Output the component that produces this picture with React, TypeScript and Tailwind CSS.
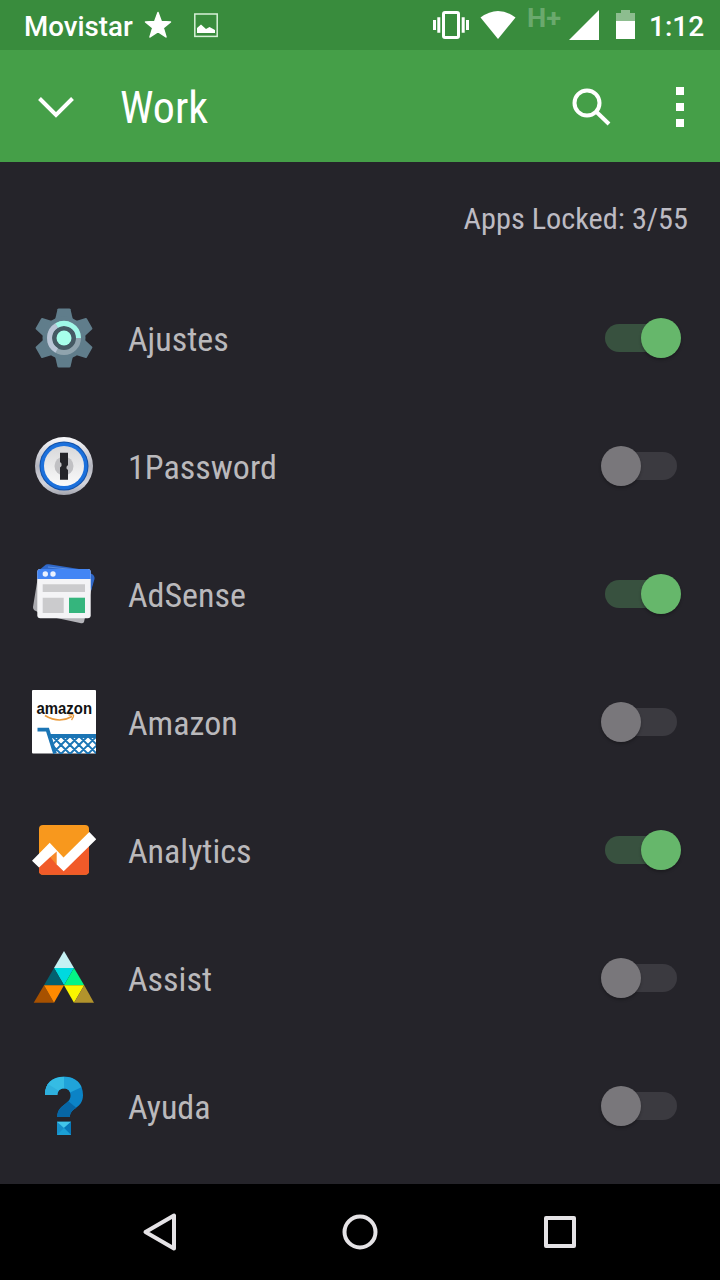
import React from 'react';

interface AppItem {
  name: string;
  locked: boolean;
  icon: React.ReactNode;
}

const SettingsIcon = () => (
  <svg className="size-16" viewBox="0 0 64 64">
    <g fill="#607d8b">
      {[0, 60, 120, 180, 240, 300].map((angle) => (
        <path key={angle} d="M23 14 25.500 3.200Q25.800 2.500 26.600 2.500H37.400Q38.200 2.500 38.500 3.200L41 14Z" transform={`rotate(${angle} 32 32)`} />
      ))}
      <circle cx="32" cy="32" r="21.500" />
    </g>
    <circle cx="32" cy="32" r="12.500" fill="#455a64" />
    <g fill="none" strokeWidth="5">
      <circle cx="32" cy="32" r="14.500" stroke="#90a4ae" />
      <path d="M24.700 44.500A14.500 14.500 0 0 1 24.700 19.500" stroke="#b9c5d6" />
      <path d="M24.700 19.500A14.500 14.500 0 0 1 46.500 32" stroke="#a0f8e8" />
    </g>
    <circle cx="32" cy="32" r="7.500" fill="#a7ffeb" />
  </svg>
);

const PasswordIcon = () => (
  <svg className="size-16" viewBox="0 0 64 64">
    <defs>
      <linearGradient id="rim" x1="0" y1="0" x2="0" y2="1">
        <stop offset="0" stopColor="#fafafd" />
        <stop offset="0.5" stopColor="#b4b5be" />
        <stop offset="0.8" stopColor="#d4d5dd" />
        <stop offset="1" stopColor="#a3a4ad" />
      </linearGradient>
      <linearGradient id="face" x1="0" y1="0" x2="0" y2="1">
        <stop offset="0" stopColor="#d8d8da" />
        <stop offset="1" stopColor="#fafafa" />
      </linearGradient>
    </defs>
    <circle cx="32" cy="32" r="29" fill="url(#rim)" />
    <circle cx="32" cy="32" r="24.500" fill="#1452a8" />
    <circle cx="32" cy="32" r="23.500" fill="#1b70dc" />
    <circle cx="32" cy="32" r="20" fill="url(#face)" />
    <circle cx="32" cy="32" r="9.500" fill="#c0c0c3" />
    <path d="M28 18.700H36V31Q33.800 32.500 34.500 34.500L36 36V45.700H28V33.500Q30.300 31.500 29.500 29.500L28 28Z" fill="#252529" />
  </svg>
);

const AdSenseIcon = () => (
  <svg className="size-16" viewBox="0 0 64 64">
    <path d="M7 8 1 45Q1 48 4 49L10 53Z" fill="#aaaaaf" />
    <path d="M55 12 62 15 52 60Q51 62 48 61L20 55Z" fill="#b4b4b9" />
    <path d="M6 9 14 2.500Q15 2 17 2.300L47 7 60 12Q63 14 62.500 17L59 29 54 12Z" fill="#2f68ca" />
    <path d="M16 5 45 8" stroke="#5b8fe2" strokeWidth="1" />
    <rect x="5.300" y="7" width="53.400" height="49.300" rx="3" fill="#f4f4f6" />
    <path d="M5.300 17V10Q5.300 7 8.300 7H55.700Q58.700 7 58.700 10V17Z" fill="#4285f4" />
    <circle cx="13.300" cy="12" r="2.700" fill="#e9f1ff" />
    <circle cx="21" cy="12" r="2.700" fill="#e9f1ff" />
    <path d="M10.700 22.300H53V30H10.700ZM10.700 35.700H31.700V51H10.700Z" fill="#cbcbcd" />
    <path d="M37 35.700H53V51H37Z" fill="#35b57d" />
  </svg>
);

const AmazonIcon = () => (
  <svg className="size-16" viewBox="0 0 64 64">
    <defs>
      <clipPath id="basket">
        <path d="M19 45H64V64H24Z" />
      </clipPath>
    </defs>
    <rect width="64" height="63.500" rx="1" fill="#fff" />
    <text x="4.500" y="24" fontSize="16.500" fontWeight="700" fontFamily="Liberation Sans, sans-serif" textLength="55.500" lengthAdjust="spacingAndGlyphs" fill="#111">amazon</text>
    <path d="M13 25.500Q27 34 40 26.500" fill="none" stroke="#e99a3a" strokeWidth="1.700" />
    <path d="M36.500 25.200Q41 24 41.500 25.300T39.500 30" fill="none" stroke="#e99a3a" strokeWidth="1.300" />
    <path d="M5.500 39.700H15.500L23 63.500" fill="none" stroke="#1b75b5" strokeWidth="3.800" />
    <path d="M17 46H64" stroke="#1b75b5" strokeWidth="3.800" />
    <g clipPath="url(#basket)" stroke="#1b75b5" strokeWidth="1.900">
      <path d="M11 46 29 64M20 46 38 64M29 46 47 64M38 46 56 64M47 46 65 64M56 46 74 64M29 46 11 64M38 46 20 64M47 46 29 64M56 46 38 64M65 46 47 64M74 46 56 64" />
    </g>
  </svg>
);

const AnalyticsIcon = () => (
  <svg className="size-16" viewBox="0 0 64 64">
    <rect x="7" y="7" width="50" height="49.700" rx="4" fill="#f8981d" />
    <path d="M7 48 18 38 25 45 32 50 57 22V52.700Q57 56.700 53 56.700H11Q7 56.700 7 52.700Z" fill="#f15a29" />
    <path d="M18 39 25 32V47Z" fill="#f7892a" />
    <path d="M0 42.700 17.700 24.700 31.500 39.500 57.300 14 64.300 21.300 31.700 53.300 24.700 46.500V33.500L18 39.300 7 49.500Z" fill="#fff" />
  </svg>
);

const AssistIcon = () => (
  <svg className="size-16" viewBox="0 0 64 64">
    <path d="M32 5 42 22H22Z" fill="#c5f1f3" />
    <path d="M22 22H42L32 39.300Z" fill="#00d9df" />
    <path d="M22 22 32 39.300H12Z" fill="#04606f" />
    <path d="M42 22 52.200 39.300H32Z" fill="#04f486" />
    <path d="M12 39.300 22 56.700H1.700Z" fill="#a75100" />
    <path d="M12 39.300H32L22 56.700Z" fill="#ff8a00" />
    <path d="M32 39.300H52.200L42 56.700Z" fill="#fbf500" />
    <path d="M52.200 39.300 62 56.700H42Z" fill="#b2932c" />
  </svg>
);

const HelpIcon = () => (
  <svg className="size-16" viewBox="0 0 64 64">
    <defs>
      <clipPath id="hook">
        <path d="M13 21C13 9 20 2.700 32 2.700S51 10 51 21C51 35 38 33 38 43H25.300C25.300 30 38.500 31 38.500 21.500C38.500 17 36 14.500 32 14.500S25.300 17 25.300 21Z" />
      </clipPath>
    </defs>
    <g clipPath="url(#hook)">
      <path d="M0 0H64V64H0Z" fill="#0b83c6" />
      <path d="M32 0V16L25 22H0V0Z" fill="#35bce4" />
      <path d="M0 0 32 20 25 22H0Z" fill="#2eb0dd" />
      <path d="M32 0H54V11L37 19 32 15Z" fill="#20a3d9" />
      <path d="M36 27 47 36 38 44H24V34Z" fill="#0766a5" />
    </g>
    <path d="M25 47.700H39V61H25Z" fill="#168fc9" />
    <path d="M25 47.700H39L32 54Z" fill="#42c6ea" />
    <path d="M39 47.700V61L32 54Z" fill="#0878b8" />
    <path d="M25 61H39L32 54Z" fill="#1ba0d5" />
  </svg>
);

const apps: AppItem[] = [
  { name: 'Ajustes', locked: true, icon: <SettingsIcon /> },
  { name: '1Password', locked: false, icon: <PasswordIcon /> },
  { name: 'AdSense', locked: true, icon: <AdSenseIcon /> },
  { name: 'Amazon', locked: false, icon: <AmazonIcon /> },
  { name: 'Analytics', locked: true, icon: <AnalyticsIcon /> },
  { name: 'Assist', locked: false, icon: <AssistIcon /> },
  { name: 'Ayuda', locked: false, icon: <HelpIcon /> },
];

const Toggle: React.FC<{ on: boolean }> = ({ on }) => (
  <div className={on ? 'flex h-7 w-[72px] items-center justify-end rounded-full bg-[#38513f]' : 'flex h-7 w-[72px] items-center rounded-full bg-[#3b3a40]'}>
    <div className={on ? 'size-10 rounded-full bg-[#66b76b] shadow-[0_2px_3px_rgba(0,0,0,0.25)] -mr-1' : 'size-10 rounded-full bg-[#79777b] shadow-[0_2px_3px_rgba(0,0,0,0.25)] -ml-1'} />
  </div>
);

const StatusBar = () => (
  <header className="flex h-[50px] items-center bg-[#398c3d] pl-6 pr-4 font-['Roboto',sans-serif] font-medium text-white">
    <span className="w-[118px] pt-1 text-[27.7px] leading-none">Movistar</span>
    <svg className="h-[50px] w-20" viewBox="142 0 80 50">
      <path d="M158 12.500 161.300 21.500 170.500 22 163.200 27.800 166 37 158 31.600 150 37 152.800 27.800 145.500 22 154.700 21.500Z" fill="#fff" stroke="#fff" strokeWidth="1.500" strokeLinejoin="round" />
      <rect x="194.800" y="14" width="22.400" height="22.400" fill="none" stroke="#d7f0d8" strokeWidth="1.500" />
      <path d="M197 33V28L201 24.500 206 29 209.500 27 215 30V33Z" fill="#fff" />
    </svg>
    <svg className="ml-auto h-[50px] w-[215px]" viewBox="430 0 215 50">
      <g fill="#fff">
        <path d="M433 20H436V30H433ZM437.300 17.300H440.300V32.700H437.300ZM461.700 17.300H464.700V32.700H461.700ZM466 20H469V30H466Z" />
        <path d="M480.500 17.500Q498 4.500 515.500 17.500L498 39Z" />
        <path d="M569 40 599 10V40Z" />
        <path d="M616 21H635V39H616Z" />
      </g>
      <rect x="443.500" y="12.500" width="15" height="25" rx="1.500" fill="none" stroke="#fff" strokeWidth="3" />
      <path d="M616 21V13H621V10H630V13H635V21Z" fill="#8dbd8f" />
      <text x="527" y="27" fontFamily="Roboto, sans-serif" fontSize="25" fontWeight="700" textLength="34" lengthAdjust="spacingAndGlyphs" fill="#6aa96d">H+</text>
    </svg>
    <span className="w-[59px] pl-1 pt-1 text-[28px] leading-none">1:12</span>
  </header>
);

const Toolbar = () => (
  <div className="flex h-28 items-center bg-[#459f48] text-white">
    <svg className="h-28 w-[120px]" viewBox="0 50 120 112">
      <path d="M39.500 98.500 56 115 72.500 98.500" fill="none" stroke="#fff" strokeWidth="4" />
    </svg>
    <h1 className="pt-1 text-[44px] leading-none font-normal [font-stretch:75%]">Work</h1>
    <svg className="ml-auto h-28 w-40" viewBox="560 50 160 112">
      <circle cx="587" cy="103" r="12.500" fill="none" stroke="#fff" strokeWidth="4" />
      <path d="M596 111.500 609 124" stroke="#fff" strokeWidth="4" />
      <path d="M676 87H684V95H676ZM676 103H684V111H676ZM676 119H684V127H676Z" fill="#fff" />
    </svg>
  </div>
);

const App: React.FC = () => {
  return (
    <div className="flex h-[1280px] w-[720px] flex-col overflow-hidden bg-[#25242a] font-['Roboto_Condensed','Roboto',sans-serif]">
      <StatusBar />
      <Toolbar />
      <main className="flex-1">
        <p className="flex h-28 items-center justify-end pt-0.5 pr-8 text-[30.3px] leading-none text-[#bdbbc3] [font-stretch:75%]">Apps Locked: 3/55</p>
        <ul>
          {apps.map((app) => (
            <li key={app.name} className="flex h-32 items-center pl-8 pr-[43px]">
              {app.icon}
              <span className="ml-8 pt-0.5 text-[34px] leading-none text-[#bab9bc] [font-stretch:75%]">{app.name}</span>
              <div className="ml-auto">
                <Toggle on={app.locked} />
              </div>
            </li>
          ))}
        </ul>
      </main>
      <nav className="h-24 bg-black">
        <svg className="h-24 w-full" viewBox="0 1184 720 96" fill="none" stroke="#e5e3e6" strokeWidth="4" strokeLinejoin="round">
          <path d="M174 1215.500V1248.500L145.500 1232Z" />
          <circle cx="360" cy="1232" r="15.500" />
          <rect x="546" y="1218" width="28" height="28" />
        </svg>
      </nav>
    </div>
  );
};

export default App;
